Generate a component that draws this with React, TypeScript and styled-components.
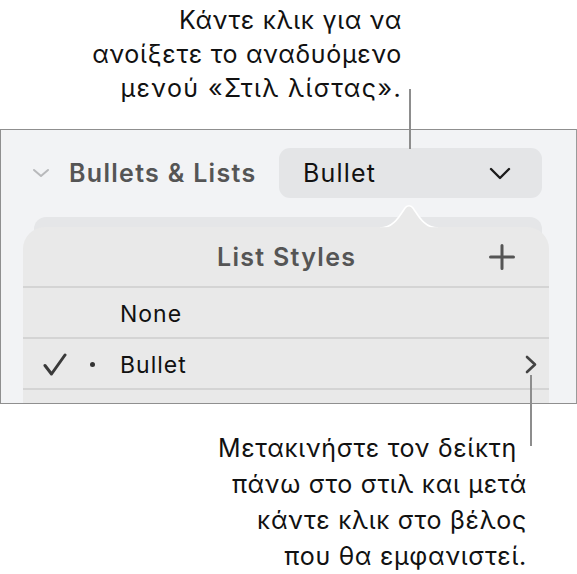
import React from "react";
import styled, { createGlobalStyle } from "styled-components";

const GlobalStyle = createGlobalStyle`
  html, body {
    margin: 0;
    padding: 0;
    background: #ffffff;
  }
  body {
    font-family: Inter, "Noto Sans", "Liberation Sans", sans-serif;
    -webkit-font-smoothing: antialiased;
  }
`;

const Page = styled.div`
  position: relative;
  width: 577px;
  height: 574px;
  overflow: hidden;
  background: #ffffff;
`;

const Callout = styled.div<{ $right: number; $top: number; $lh: number }>`
  width: ${({ $right }) => $right}px;
  margin-top: ${({ $top }) => $top}px;
  text-align: right;
  font-size: 25px;
  letter-spacing: 0.7px;
  line-height: ${({ $lh }) => $lh}px;
  color: #111111;
`;

const CalloutLine = styled.div<{ $inset?: number; $track?: number }>`
  padding-right: ${({ $inset }) => $inset ?? 0}px;
  letter-spacing: ${({ $track }) => $track ?? 0.7}px;
  white-space: nowrap;
`;

const Leader = styled.div<{ $x: number; $y: number; $h: number }>`
  position: absolute;
  left: ${({ $x }) => $x}px;
  top: ${({ $y }) => $y}px;
  width: 2px;
  height: ${({ $h }) => $h}px;
  background: #8d8d8d;
`;

const Panel = styled.div`
  box-sizing: border-box;
  width: 577px;
  height: 275px;
  margin-top: 24px;
  border: 1px solid #8f8f8f;
  border-right-color: #9a9a9a;
  background: #f2f3f5;
  overflow: hidden;
`;

const SectionRow = styled.div`
  display: flex;
  align-items: center;
  padding: 18px 34px 0 31px;
`;

const SectionTitle = styled.span`
  margin-left: 19px;
  font-size: 25px;
  font-weight: 600;
  letter-spacing: 1.3px;
  color: #555555;
`;

const PopupButton = styled.div`
  box-sizing: border-box;
  display: flex;
  align-items: center;
  justify-content: space-between;
  width: 263px;
  height: 50px;
  margin-left: auto;
  padding: 0 31px 0 24px;
  border-radius: 11px;
  background: #e4e5e7;
  font-size: 25px;
  letter-spacing: 1.2px;
  color: #111111;
`;

const PopoverArea = styled.div`
  position: relative;
  width: 526px;
  margin: 29px 0 0 22px;

  &::before {
    content: "";
    position: absolute;
    top: -10px;
    left: 11px;
    right: 7px;
    height: 40px;
    border-radius: 12px;
    background: #e5e6e8;
  }
`;

const Popover = styled.div`
  position: relative;
  height: 200px;
  border-radius: 22px 22px 0 0;
  background: #e9e9e9;
`;

const Beak = styled.svg`
  position: absolute;
  left: 357px;
  top: -24px;
`;

const PopoverHeader = styled.div`
  box-sizing: border-box;
  display: grid;
  grid-template-columns: 1fr auto 1fr;
  align-items: center;
  height: 61px;
  border-bottom: 2px solid #d4d4d4;
`;

const HeaderTitle = styled.span`
  grid-column: 2;
  padding-left: 1.3px;
  font-size: 25px;
  font-weight: 600;
  letter-spacing: 1.3px;
  color: #555555;
`;

const HeaderAction = styled.span`
  grid-column: 3;
  justify-self: end;
  display: flex;
  margin-right: 34px;
`;

const StyleRow = styled.div`
  box-sizing: border-box;
  display: flex;
  align-items: center;
  height: 51px;
  padding: 2px 12px 0 20px;
  border-bottom: 2px solid #d4d4d4;
  font-size: 23px;
  letter-spacing: 1px;
  color: #111111;
`;

const CheckCell = styled.span`
  display: flex;
  width: 24px;
`;

const DotCell = styled.span`
  display: flex;
  justify-content: center;
  width: 50px;
  margin-right: 3px;
`;

const Dot = styled.span`
  width: 5px;
  height: 5px;
  border-radius: 50%;
  background: #333333;
`;

const RowLabel = styled.span`
  flex: 1;
`;

const Disclosure = () => (
  <svg width="18" height="10" viewBox="0 0 18 10">
    <path d="M2 2 L9 8 L16 2" fill="none" stroke="#b8b9bb" strokeWidth="2" strokeLinecap="round" strokeLinejoin="round" />
  </svg>
);

const PopupChevron = () => (
  <svg width="22" height="13" viewBox="0 0 22 13">
    <path d="M2 2 L11 11 L20 2" fill="none" stroke="#1c1c1c" strokeWidth="2.4" strokeLinecap="round" strokeLinejoin="round" />
  </svg>
);

const Plus = () => (
  <svg width="26" height="26" viewBox="0 0 26 26">
    <path d="M13 1.5 V24.5 M1.5 13 H24.5" fill="none" stroke="#555555" strokeWidth="3" strokeLinecap="round" />
  </svg>
);

const Check = () => (
  <svg width="24" height="23" viewBox="0 0 24 23">
    <path d="M2 12.5 L8.5 21 L22 2" fill="none" stroke="#3a3a3a" strokeWidth="3" strokeLinecap="round" strokeLinejoin="round" />
  </svg>
);

const ChevronRight = () => (
  <svg width="12" height="19" viewBox="0 0 12 19">
    <path d="M2 2 L10 9.5 L2 17" fill="none" stroke="#444444" strokeWidth="2.6" strokeLinecap="round" strokeLinejoin="round" />
  </svg>
);

export default function App() {
  return (
    <Page>
      <GlobalStyle />
      <Callout $right={402} $top={3} $lh={34}>
        <CalloutLine>Κάντε κλικ για να</CalloutLine>
        <CalloutLine>ανοίξετε το αναδυόμενο</CalloutLine>
        <CalloutLine $track={1.4}>μενού «Στιλ λίστας».</CalloutLine>
      </Callout>

      <Panel>
        <SectionRow>
          <Disclosure />
          <SectionTitle>Bullets &amp; Lists</SectionTitle>
          <PopupButton>
            <span>Bullet</span>
            <PopupChevron />
          </PopupButton>
        </SectionRow>

        <PopoverArea>
          <Popover>
            <Beak width="58" height="26" viewBox="0 0 58 26">
              <path
                d="M0 25 C14 25 20 12 25 5 C27 2 31 2 33 5 C38 12 44 25 58 25"
                fill="#e9e9e9"
                stroke="#ffffff"
                strokeWidth="1.6"
              />
              <rect x="0" y="24.2" width="58" height="2" fill="#e9e9e9" />
            </Beak>
            <PopoverHeader>
              <HeaderTitle>List Styles</HeaderTitle>
              <HeaderAction>
                <Plus />
              </HeaderAction>
            </PopoverHeader>
            <StyleRow>
              <CheckCell />
              <DotCell />
              <RowLabel>None</RowLabel>
            </StyleRow>
            <StyleRow>
              <CheckCell>
                <Check />
              </CheckCell>
              <DotCell>
                <Dot />
              </DotCell>
              <RowLabel>Bullet</RowLabel>
              <ChevronRight />
            </StyleRow>
          </Popover>
        </PopoverArea>
      </Panel>

      <Callout $right={527} $top={26} $lh={36}>
        <CalloutLine $inset={10}>Μετακινήστε τον δείκτη</CalloutLine>
        <CalloutLine>πάνω στο στιλ και μετά</CalloutLine>
        <CalloutLine>κάντε κλικ στο βέλος</CalloutLine>
        <CalloutLine>που θα εμφανιστεί.</CalloutLine>
      </Callout>

      <Leader $x={409} $y={89} $h={60} />
      <Leader $x={530} $y={375} $h={71} />
    </Page>
  );
}
